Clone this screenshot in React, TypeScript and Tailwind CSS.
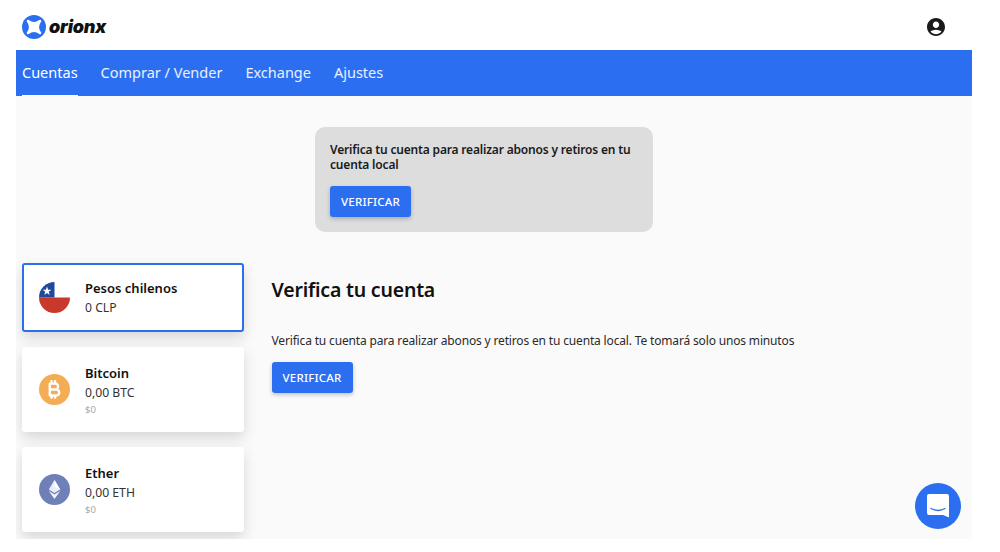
import { FaBitcoinSign } from "react-icons/fa6";

function Logo() {
  return (
    <div className="flex items-center gap-[3px]">
      <svg width="24" height="24" viewBox="0 0 24 24">
        <circle cx="12" cy="12" r="12" fill="#2b6ff0" />
        <path
          d="M6 6 Q12 10.5 18 6 Q13.5 12 18 18 Q12 13.5 6 18 Q10.5 12 6 6 Z"
          fill="#fff"
          stroke="#fff"
          strokeWidth="2.6"
          strokeLinejoin="round"
        />
      </svg>
      <span className="font-['Inter',sans-serif] text-[18px] font-black italic leading-none tracking-[-0.2px] text-[#111]">orionx</span>
    </div>
  );
}

function ChileFlag() {
  return (
    <svg width="31" height="31" viewBox="0 0 31 31">
      <path d="M0 15.5 A15.5 15.5 0 0 0 31 15.5 Z" fill="#c8392b" />
      <path d="M15.5 0 A15.5 15.5 0 0 0 0 15.5 H15.5 Z" fill="#1f4a9c" />
      <path d="M8 4.5 l1.1 3.2 h3.3 l-2.7 2 1 3.2 -2.7 -2 -2.7 2 1 -3.2 -2.7 -2 h3.3 Z" fill="#fff" />
    </svg>
  );
}

function BitcoinIcon() {
  return (
    <div className="flex h-[31px] w-[31px] items-center justify-center rounded-full bg-[#f3ad55]">
      <FaBitcoinSign size={19} className="text-white" />
    </div>
  );
}

function EtherIcon() {
  return (
    <svg width="31" height="31" viewBox="0 0 31 31">
      <circle cx="15.5" cy="15.5" r="15.5" fill="#6f80b8" />
      <path d="M15.5 6 L21.2 15.6 L15.5 19 L9.8 15.6 Z" fill="#e9ecf7" />
      <path d="M15.5 6 L21.2 15.6 L15.5 13 Z" fill="#ffffff" />
      <path d="M15.5 20.4 L21.2 17 L15.5 25 L9.8 17 Z" fill="#f4f5fb" />
    </svg>
  );
}

function AccountCard({
  icon,
  name,
  amount,
  fiat,
  active,
}: {
  icon: React.ReactNode;
  name: string;
  amount: string;
  fiat?: string;
  active?: boolean;
}) {
  return (
    <div
      className={
        active
          ? "flex h-[69px] items-center gap-[15px] rounded-[3px] border-2 border-[#2b6ff0] bg-white pl-[15px] shadow-[0_6px_14px_rgba(0,0,0,0.14)]"
          : "flex h-[85px] items-center gap-[15px] rounded-[3px] bg-white pl-[17px] shadow-[0_6px_14px_rgba(0,0,0,0.14)]"
      }
    >
      {icon}
      <div className={active ? "flex flex-col" : "flex flex-col pt-[1px]"}>
        <span className="text-[13px] leading-[20px] font-semibold text-[#111]">{name}</span>
        <span className="text-[12.2px] leading-[19px] text-[#333]">{amount}</span>
        {fiat ? <span className="text-[9.5px] leading-[15px] text-[#a8a8a8]">{fiat}</span> : null}
      </div>
    </div>
  );
}

function VerifyButton() {
  return (
    <button className="h-[31px] w-[81px] rounded-[3px] bg-[#2b6ff0] text-[11.5px] font-medium tracking-[0.2px] text-white shadow-[0_2px_4px_rgba(0,0,0,0.22)]">
      VERIFICAR
    </button>
  );
}

export default function App() {
  const tabs = ["Comprar / Vender", "Exchange", "Ajustes"];

  return (
    <div className="relative h-[552px] w-[1000px] overflow-hidden bg-white pr-[28px] pl-4 font-['Noto_Sans',sans-serif]">
      <header className="flex h-[50px] items-center justify-between pt-[4px] pr-[27px] pl-[6px]">
        <Logo />
        <svg width="18" height="18" viewBox="2 2 20 20" fill="#1a1a1a">
          <path d="M12 2C6.48 2 2 6.48 2 12s4.48 10 10 10 10-4.48 10-10S17.52 2 12 2zm0 4c1.93 0 3.5 1.57 3.5 3.5S13.93 13 12 13s-3.5-1.57-3.5-3.5S10.07 6 12 6zm0 14c-2.03 0-4.43-.82-6.14-2.88C7.55 15.8 9.68 15 12 15s4.45.8 6.14 2.12C16.43 19.18 14.03 20 12 20z" />
        </svg>
      </header>

      <nav className="flex h-[46px] items-stretch gap-[23px] bg-[#2b6ff0] pl-[6px] text-[14.5px] text-white/90">
        <a className="flex items-center border-b-[1px] border-white text-white">Cuentas</a>
        {tabs.map((tab) => (
          <a key={tab} className="flex items-center">
            {tab}
          </a>
        ))}
      </nav>

      <main className="h-[443px] overflow-hidden bg-[#fafafa] pt-[31px] pl-[6px]">
        <div className="ml-[293px] h-[105px] w-[338px] rounded-[10px] bg-[#dddddd] px-[15px] pt-[15px]">
          <p className="text-[12px] leading-[15px] font-semibold tracking-[-0.18px] text-[#1a1a1a]">
            Verifica tu cuenta para realizar abonos y retiros en tu cuenta local
          </p>
          <div className="mt-[14px]">
            <VerifyButton />
          </div>
        </div>

        <div className="mt-[31px] flex gap-[27.5px]">
          <div className="flex w-[222px] shrink-0 flex-col gap-[15px]">
            <AccountCard icon={<ChileFlag />} name="Pesos chilenos" amount="0 CLP" active />
            <AccountCard icon={<BitcoinIcon />} name="Bitcoin" amount="0,00 BTC" fiat="$0" />
            <AccountCard icon={<EtherIcon />} name="Ether" amount="0,00 ETH" fiat="$0" />
          </div>
          <div className="pt-[12px]">
            <h1 className="text-[19.5px] leading-[30px] font-semibold tracking-[-0.2px] text-[#111]">Verifica tu cuenta</h1>
            <p className="mt-[26px] text-[12px] leading-[20px] tracking-[-0.16px] text-[#2a2a2a]">
              Verifica tu cuenta para realizar abonos y retiros en tu cuenta local. Te tomará solo unos minutos
            </p>
            <div className="mt-[11px]">
              <VerifyButton />
            </div>
          </div>
        </div>
      </main>

      <button className="absolute top-[483px] left-[915px] flex h-[46px] w-[46px] items-center justify-center rounded-full bg-[#2b6ff0]">
        <svg width="24" height="26" viewBox="0 0 24 26">
          <path d="M3 1 H21 a2 2 0 0 1 2 2 V24.5 L17 22 H3 a2 2 0 0 1 -2 -2 V3 a2 2 0 0 1 2 -2 Z" fill="#fff" />
          <path d="M5 15.5 Q12 19.5 19 15.5" fill="none" stroke="#2b6ff0" strokeWidth="1.4" strokeLinecap="round" />
        </svg>
      </button>
    </div>
  );
}
